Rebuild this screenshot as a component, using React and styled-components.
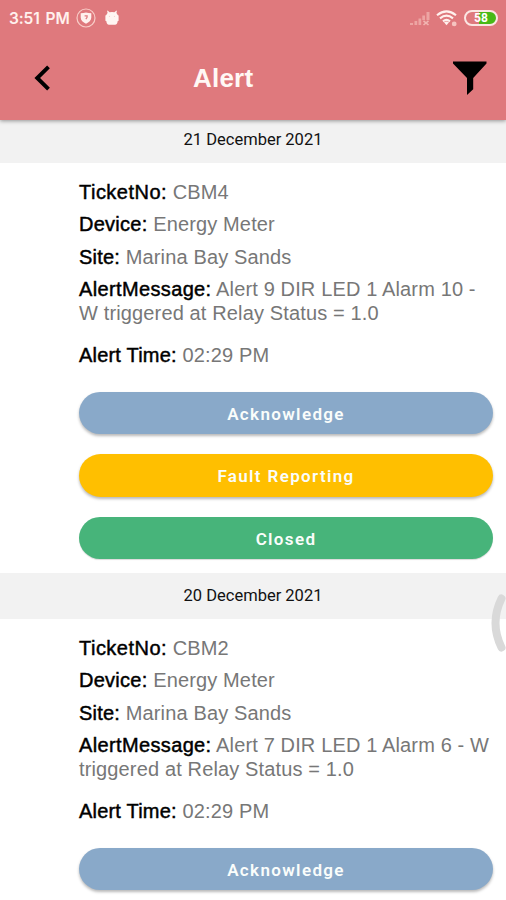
import styled, { createGlobalStyle } from "styled-components";

const GlobalStyle = createGlobalStyle`
  * {
    box-sizing: border-box;
  }

  body {
    margin: 0;
    background: #fff;
    overflow: hidden;
  }

  p {
    margin: 0;
  }
`;

const Screen = styled.div`
  position: relative;
  width: 506px;
  height: 900px;
  overflow: hidden;
  background: #fff;
  font-family: "Liberation Sans", Arial, sans-serif;
`;

const Header = styled.header`
  position: relative;
  z-index: 1;
  height: 120px;
  margin-bottom: -3px;
  background: #df797d;
  box-shadow: 0 1px 4px rgba(0, 0, 0, 0.4);
`;

const StatusBar = styled.div`
  display: flex;
  align-items: center;
  height: 36px;
  padding: 0 8px 0 9px;
  color: #fff1ee;

  svg {
    display: block;
  }
`;

const Clock = styled.span`
  width: 67px;
  padding-top: 1px;
  font-family: Inter, sans-serif;
  font-size: 15.5px;
  font-weight: 600;
  letter-spacing: -0.1px;
  word-spacing: 2px;
  white-space: nowrap;
`;

const StatusIcons = styled.div`
  display: flex;
  align-items: center;
  gap: ${(props) => props.$gap};
  margin-left: ${(props) => props.$left};
`;

const Battery = styled.div`
  display: flex;
  align-items: center;
  justify-content: center;
  width: 34px;
  height: 16px;
  border: 2px solid #fbe6e3;
  border-radius: 8px;
  background: linear-gradient(90deg, #df797d 43%, #48b916 43%);
  color: #fff;
  font-family: Roboto, sans-serif;
  font-size: 12px;
  font-weight: 700;
  line-height: 12px;
`;

const NavBar = styled.div`
  display: grid;
  grid-template-columns: 160px 1fr 53px;
  align-items: center;
  height: 84px;
`;

const IconButton = styled.button`
  display: flex;
  padding: 0 0 0 ${(props) => props.$left || "0"};
  border: none;
  background: none;
  color: #000;
`;

const Title = styled.h1`
  margin: 0;
  padding-left: 33px;
  color: #fff8f5;
  font-size: 26px;
  font-weight: 700;
  letter-spacing: 0.2px;
  line-height: 30px;
`;

const DateBar = styled.div`
  display: flex;
  align-items: center;
  justify-content: center;
  height: 46px;
  padding-bottom: 1px;
  background: #f2f2f2;
  color: #111;
  font-family: Roboto, sans-serif;
  font-size: 16.5px;
`;

const Card = styled.article`
  height: 410px;
  padding: 17px 13px 0 79px;
`;

const Row = styled.p`
  margin-bottom: 8.4px;
  color: #777;
  font-size: 20px;
  letter-spacing: 0.14px;
  line-height: 24px;
`;

const TimeRow = styled(Row)`
  margin: 17.6px 0 25px;
`;

const Label = styled.span`
  color: #000;
  letter-spacing: ${(props) => props.$spacing || "0.2px"};
  -webkit-text-stroke: 0.45px #000;
`;

const Actions = styled.div`
  display: grid;
  gap: 20px;
`;

const colors = {
  acknowledge: "#89a9c9",
  fault: "#ffbf00",
  closed: "#47b47a",
};

const Button = styled.button`
  height: 42.5px;
  padding: 1px 0 0;
  border: none;
  border-radius: 22px;
  background: ${(props) => colors[props.$type]};
  box-shadow: ${(props) =>
    props.$type === "closed"
      ? "0 1px 1px rgba(0, 0, 0, 0.15)"
      : "0 2px 3px rgba(0, 0, 0, 0.28)"};
  color: #fafdfb;
  font-family: Roboto, sans-serif;
  font-size: 17px;
  font-weight: 600;
  letter-spacing: 1.35px;
`;

const Handle = styled.svg`
  position: absolute;
  top: 592px;
  right: 0;
`;

const alerts = [
  {
    date: "21 December 2021",
    ticket: "CBM4",
    device: "Energy Meter",
    site: "Marina Bay Sands",
    message: "Alert 9 DIR LED 1 Alarm 10 - W triggered at Relay Status = 1.0",
    time: "02:29 PM",
    actions: [
      { type: "acknowledge", text: "Acknowledge" },
      { type: "fault", text: "Fault Reporting" },
      { type: "closed", text: "Closed" },
    ],
  },
  {
    date: "20 December 2021",
    ticket: "CBM2",
    device: "Energy Meter",
    site: "Marina Bay Sands",
    message: "Alert 7 DIR LED 1 Alarm 6 - W triggered at Relay Status = 1.0",
    time: "02:29 PM",
    actions: [{ type: "acknowledge", text: "Acknowledge" }],
  },
];

function ShieldIcon() {
  return (
    <svg width="20" height="20" viewBox="0 0 20 20" fill="none">
      <circle cx="10" cy="10" r="9" stroke="#f8ccc7" strokeWidth="1.2" />
      <path d="M10 4.4 12.5 5l2.8.3v4.2c0 2.8-2.4 4.8-5.3 6.3-2.9-1.5-5.3-3.5-5.3-6.3V5.3L7.5 5Z" fill="#fff1ee" />
      <path d="M8.6 7.8h2.6q.3 1.5-1.4 3.4" stroke="#df797d" strokeWidth="1.2" />
    </svg>
  );
}

function DroidIcon() {
  return (
    <svg width="14" height="16" viewBox="0 0 14 16" fill="#fff6f3">
      <path d="M2.6.4 4.6 2.3Q7 1.7 9.4 2.3L11.4.4l.5.5-.5 2q1 .8 1.2 2.2l1 .4v5.2l-1 .5q-.2 3.4-2.6 3.6H4q-2.4-.2-2.6-3.6l-1-.5V5.5l1-.4q.2-1.4 1.2-2.2l-.5-2Z" />
      <circle cx="4.5" cy="6.3" r=".6" fill="#f5cfcc" />
      <circle cx="9.5" cy="6.3" r=".6" fill="#f5cfcc" />
    </svg>
  );
}

function SignalIcon() {
  return (
    <svg width="20" height="15" viewBox="0 0 20 15" fill="#eda5a3">
      <path d="M0 12h3v2H0ZM4.5 10h2.7v4H4.5ZM8.5 7.5h2.7V14H8.5ZM12.3 4.5H15V9h-2.7ZM16.5 1h3v8h-3Z" />
      <path d="m13.5 9.8 5 4.2m0-4.2-5 4.2" stroke="#f1b5b1" strokeWidth="1.6" />
    </svg>
  );
}

function WifiIcon() {
  return (
    <svg width="22" height="17" viewBox="0 0 22 17" fill="none">
      <path
        d="M1 5.2Q10.5-2.5 20 5.2M4 8.4q6.5-5.4 13 0M7 11.4q3.5-3 7 0"
        stroke="#fff1ee"
        strokeWidth="2.1"
      />
      <path d="M8 12.2q2.5-1.4 5 0l-2.5 3Z" fill="#fff1ee" />
      <circle cx="18.2" cy="13.9" r="2.4" fill="#f6c4c0" />
    </svg>
  );
}

function Alert({ alert }) {
  return (
    <section>
      <DateBar>{alert.date}</DateBar>
      <Card>
        <Row>
          <Label $spacing="0.48px">TicketNo:</Label> {alert.ticket}
        </Row>
        <Row>
          <Label $spacing="0.25px">Device:</Label> {alert.device}
        </Row>
        <Row>
          <Label>Site:</Label> {alert.site}
        </Row>
        <Row>
          <Label $spacing="0.36px">AlertMessage:</Label> {alert.message}
        </Row>
        <TimeRow>
          <Label>Alert Time:</Label> {alert.time}
        </TimeRow>
        <Actions>
          {alert.actions.map((action) => (
            <Button key={action.type} $type={action.type}>
              {action.text}
            </Button>
          ))}
        </Actions>
      </Card>
    </section>
  );
}

function App() {
  return (
    <>
      <GlobalStyle />
      <Screen>
        <Header>
          <StatusBar>
            <Clock>3:51 PM</Clock>
            <StatusIcons $gap="9px">
              <ShieldIcon />
              <DroidIcon />
            </StatusIcons>
            <StatusIcons $gap="6px" $left="auto">
              <SignalIcon />
              <WifiIcon />
              <Battery>58</Battery>
            </StatusIcons>
          </StatusBar>
          <NavBar>
            <IconButton $left="34px" aria-label="Back">
              <svg width="17" height="26" viewBox="0 0 17 26" fill="none">
                <path d="M14.5 1.8 3.2 13l11.3 11.2" stroke="#000" strokeWidth="3.9" />
              </svg>
            </IconButton>
            <Title>Alert</Title>
            <IconButton aria-label="Filter">
              <svg width="34" height="35" viewBox="0 0 34 35">
                <path d="M0 .5h33.5v2L20.2 17v11.3L14 34V17L0 2.5Z" />
              </svg>
            </IconButton>
          </NavBar>
        </Header>
        {alerts.map((alert) => (
          <Alert key={alert.date} alert={alert} />
        ))}
        <Handle width="16" height="62" viewBox="0 0 16 62" fill="none">
          <path d="M11.5 6.5Q-.5 31 11.5 55.5" stroke="#d9d9d9" strokeWidth="8" strokeLinecap="round" />
        </Handle>
      </Screen>
    </>
  );
}

export default App;
